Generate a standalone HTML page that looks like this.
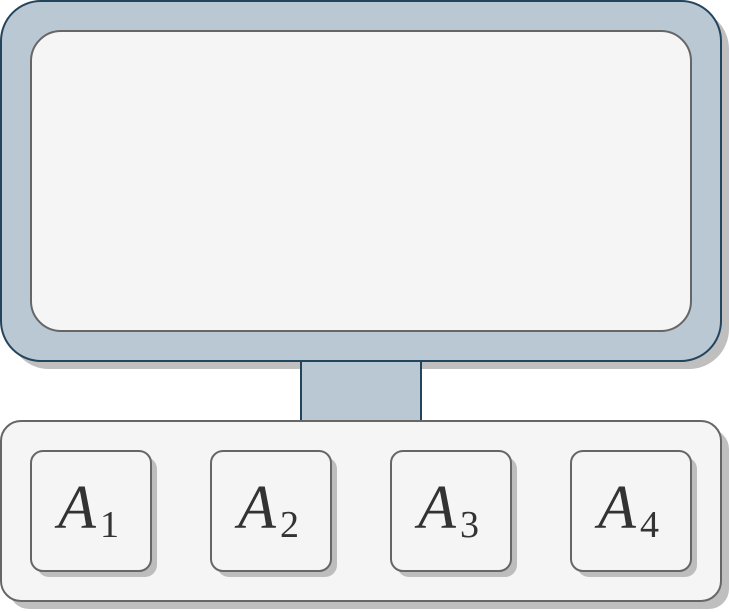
<!DOCTYPE html>
<html><head><meta charset="utf-8"><style>html,body{margin:0;padding:0;background:#fff}svg{display:block}</style></head><body>
<svg width="729" height="612" viewBox="0 0 729 612" xmlns="http://www.w3.org/2000/svg">
<g fill="#bfbfbf">
<rect x="9" y="9" width="720" height="360" rx="40"/>
<rect x="9" y="429" width="720" height="180" rx="20"/>
</g>
<rect x="1" y="1" width="720" height="360" rx="40" fill="#bac8d3" stroke="#23445d" stroke-width="2"/>
<rect x="31" y="31" width="660" height="300" rx="30" fill="#f5f5f5" stroke="#666" stroke-width="2"/>
<rect x="301" y="361" width="120" height="60" fill="#bac8d3" stroke="#23445d" stroke-width="2"/>
<rect x="1" y="421" width="720" height="180" rx="20" fill="#f5f5f5" stroke="#666" stroke-width="2"/>
<g fill="#bdbdbd">
<rect x="37" y="457" width="120" height="120" rx="12"/>
<rect x="217" y="457" width="120" height="120" rx="12"/>
<rect x="397" y="457" width="120" height="120" rx="12"/>
<rect x="577" y="457" width="120" height="120" rx="12"/>
</g>
<g fill="#f5f5f5" stroke="#666" stroke-width="2">
<rect x="31" y="451" width="120" height="120" rx="12"/>
<rect x="211" y="451" width="120" height="120" rx="12"/>
<rect x="391" y="451" width="120" height="120" rx="12"/>
<rect x="571" y="451" width="120" height="120" rx="12"/>
</g>
<g font-family="Liberation Serif, serif" fill="#333">
<text x="58" y="528" font-size="62" font-style="italic">A</text><text x="100" y="537" font-size="38">1</text>
<text x="238" y="528" font-size="62" font-style="italic">A</text><text x="280" y="537" font-size="38">2</text>
<text x="418" y="528" font-size="62" font-style="italic">A</text><text x="460" y="537" font-size="38">3</text>
<text x="598" y="528" font-size="62" font-style="italic">A</text><text x="640" y="537" font-size="38">4</text>
</g>
</svg>
</body></html>
